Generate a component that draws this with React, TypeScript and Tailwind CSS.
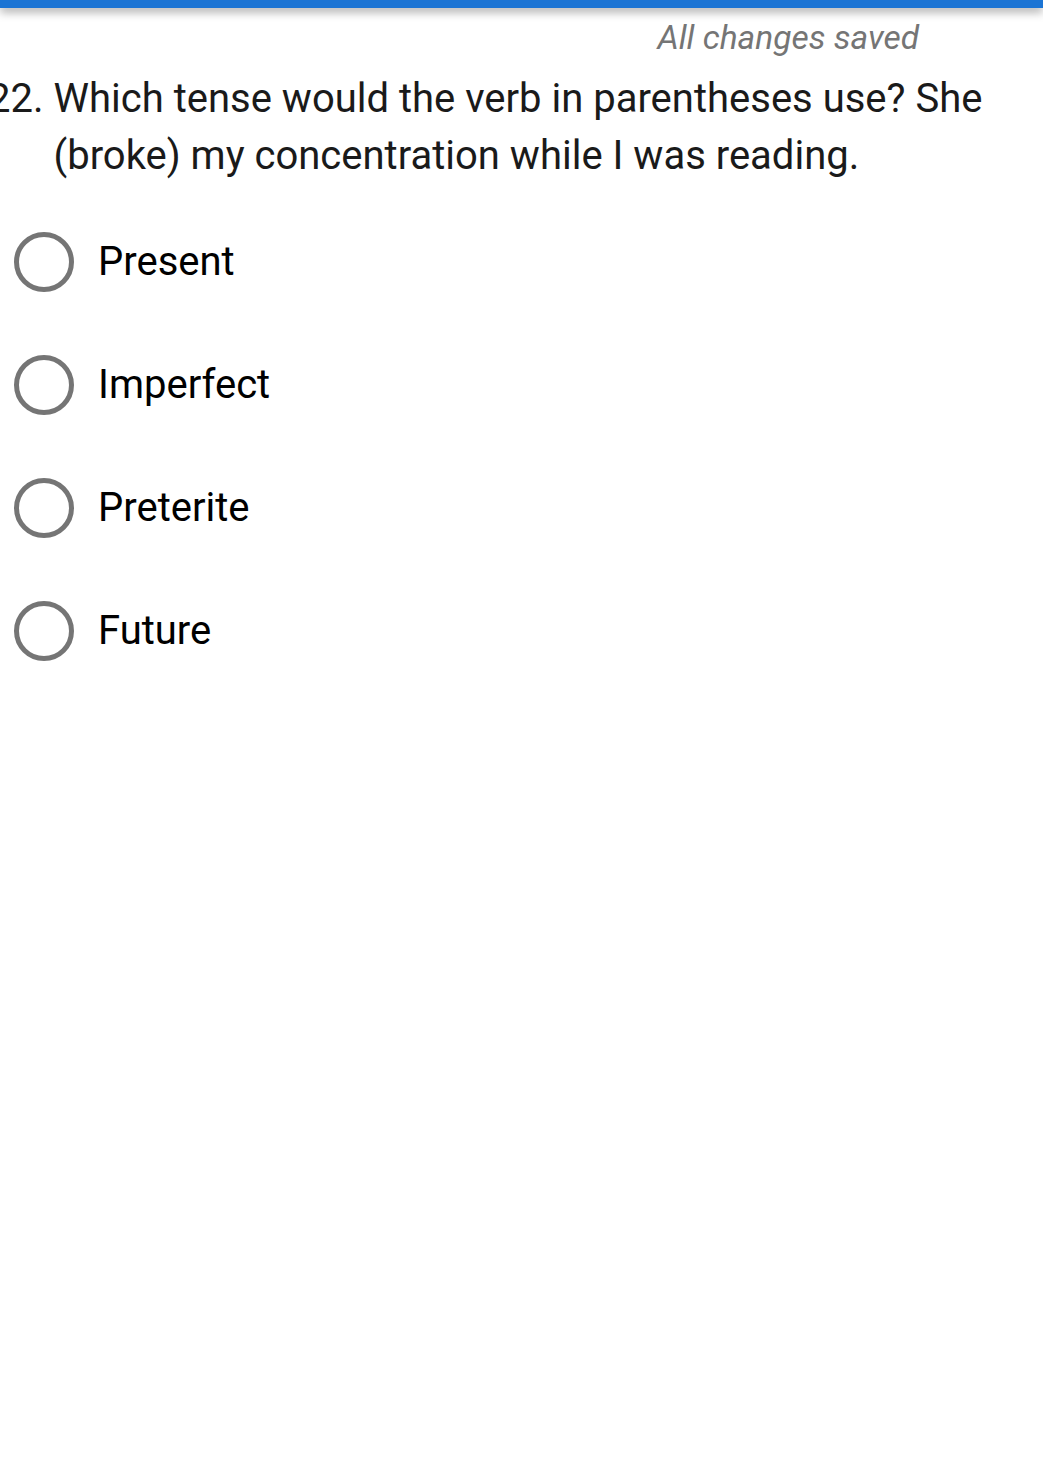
const options = ['Present', 'Imperfect', 'Preterite', 'Future'];

const RadioOption = ({ label }: { label: string }) => (
  <div className="flex items-center h-[123px]">
    <div className="ml-[14px] w-[60px] h-[60px] rounded-full border-[5px] border-[#757575] shrink-0" />
    <span className="ml-[24px] text-[40px] text-black">{label}</span>
  </div>
);

const App = () => {
  return (
    <div className="min-h-[1469px] w-[1043px] bg-white overflow-hidden" style={{ fontFamily: 'Roboto, sans-serif' }}>
      <div className="h-[8px] bg-[#1b74d4] shadow-[0_4px_10px_rgba(0,0,0,0.35)]" />
      <div className="flex justify-end pr-[124px] pt-[10px]">
        <span className="text-[33.5px] italic text-[#757575] leading-[40px]">All changes saved</span>
      </div>
      <div className="flex ml-[-12px] mt-[12px] pr-[30px] text-[40px] leading-[57px] text-[#1a1a1a]">
        <span className="shrink-0">22.</span>
        <p className="ml-[10px]">
          Which tense would the verb in parentheses use? She (broke) my concentration while I was reading.
        </p>
      </div>
      <div className="mt-[16px]">
        {options.map(o => (
          <RadioOption key={o} label={o} />
        ))}
      </div>
    </div>
  );
};

export default App;
